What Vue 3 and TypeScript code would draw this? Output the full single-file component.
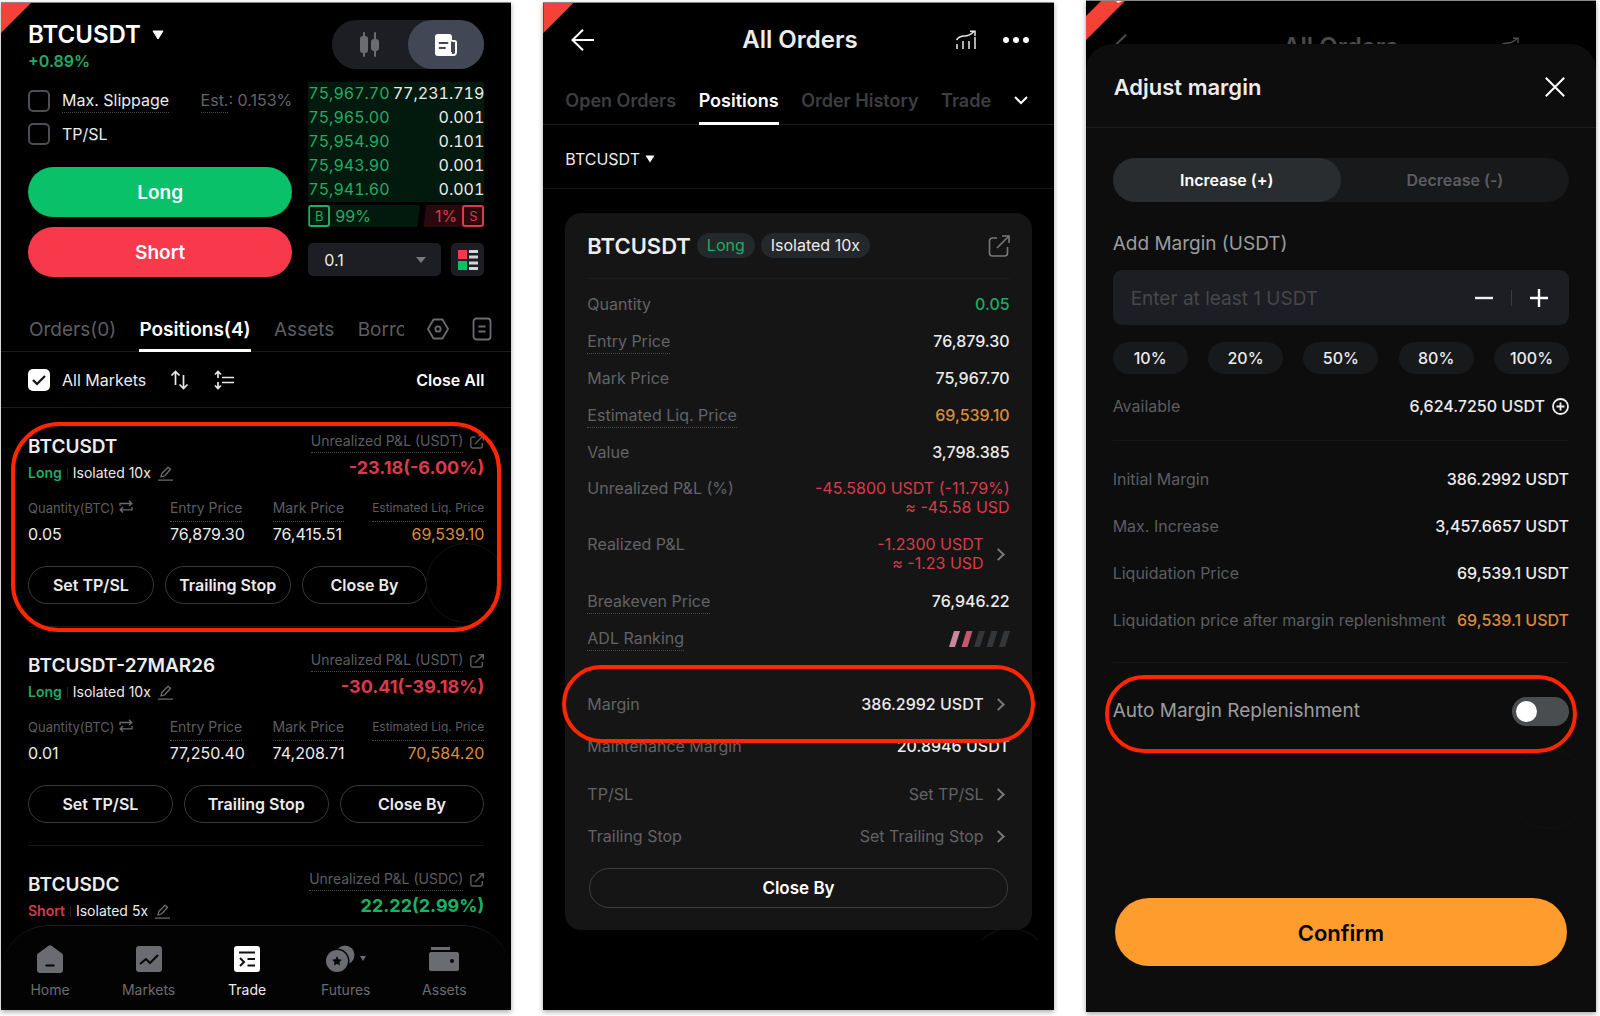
<script setup lang="ts">
import { ref } from 'vue'

interface Position {
  symbol: string
  side: 'Long' | 'Short'
  mode: string
  currency: string
  pnl: string
  tone: 'up' | 'down'
  quantity?: string
  entry?: string
  mark?: string
  liq?: string
  marked?: boolean
}

const book = [
  { price: '75,967.70', size: '77,231.719' },
  { price: '75,965.00', size: '0.001' },
  { price: '75,954.90', size: '0.101' },
  { price: '75,943.90', size: '0.001' },
  { price: '75,941.60', size: '0.001' },
]

const positions: Position[] = [
  { symbol: 'BTCUSDT', side: 'Long', mode: 'Isolated 10x', currency: 'USDT', pnl: '-23.18(-6.00%)', tone: 'down', quantity: '0.05', entry: '76,879.30', mark: '76,415.51', liq: '69,539.10', marked: true },
  { symbol: 'BTCUSDT-27MAR26', side: 'Long', mode: 'Isolated 10x', currency: 'USDT', pnl: '-30.41(-39.18%)', tone: 'down', quantity: '0.01', entry: '77,250.40', mark: '74,208.71', liq: '70,584.20' },
  { symbol: 'BTCUSDC', side: 'Short', mode: 'Isolated 5x', currency: 'USDC', pnl: '22.22(2.99%)', tone: 'up' },
]

const actions = ['Set TP/SL', 'Trailing Stop', 'Close By']

const facts = [
  { label: 'Quantity', value: '0.05', cls: 'up' },
  { label: 'Entry Price', value: '76,879.30', hint: true },
  { label: 'Mark Price', value: '75,967.70' },
  { label: 'Estimated Liq. Price', value: '69,539.10', cls: 'warn', hint: true },
  { label: 'Value', value: '3,798.385' },
]

const summary = [
  { label: 'Initial Margin', value: '386.2992 USDT' },
  { label: 'Max. Increase', value: '3,457.6657 USDT' },
  { label: 'Liquidation Price', value: '69,539.1 USDT' },
  { label: 'Liquidation price after margin replenishment', value: '69,539.1 USDT', cls: 'warn' },
]

const percents = ['10%', '20%', '50%', '80%', '100%']

const slippage = ref(false)
const tpsl = ref(false)
const allMarkets = ref(true)
const autoMargin = ref(false)
const amount = ref('')
</script>

<template>
  <main class="page">
    <!-- Trade screen -->
    <section class="phone trade">
      <span class="corner" aria-hidden="true"></span>
      <header class="pair">
        <div>
          <button class="pair-name" type="button">
            BTCUSDT
            <svg width="12" height="10" viewBox="0 0 12 10"><path d="M1 1h10L6 9z" fill="#fff" stroke="#fff" stroke-linejoin="round" /></svg>
          </button>
          <p class="change up">+0.89%</p>
        </div>
        <div class="view-switch">
          <button type="button" aria-label="Chart">
            <svg width="22" height="26" viewBox="0 0 22 26" fill="#6b6c70"><rect x="1" y="4" width="8" height="17" rx="3" /><rect x="4" y="0" width="2" height="25" rx="1" /><rect x="12" y="7" width="8" height="12" rx="3" /><rect x="15" y="0" width="2" height="25" rx="1" /></svg>
          </button>
          <button type="button" class="on" aria-label="Order form">
            <svg width="22" height="22" viewBox="0 0 22 22"><rect x="0" y="0" width="17" height="22" rx="3" fill="#fff" /><path d="M17 7h2.500a1.500 1.500 0 0 1 1.500 1.500V18.500a2.500 2.500 0 0 1-2.500 2.500H14" fill="none" stroke="#fff" stroke-width="2" /><path d="M16.800 7.500V18" stroke="#414754" stroke-width="1.600" /><path d="M4.500 9h8M4.500 14h5.500" stroke="#414754" stroke-width="1.800" stroke-linecap="round" /></svg>
          </button>
        </div>
      </header>

      <div class="order">
        <div class="order-form">
          <div class="option">
            <label><input v-model="slippage" type="checkbox" class="box" /><span class="hint">Max. Slippage</span></label>
            <span class="est"><span class="hint">Est.</span>: 0.153%</span>
          </div>
          <div class="option">
            <label><input v-model="tpsl" type="checkbox" class="box" /><span>TP/SL</span></label>
          </div>
          <button type="button" class="side buy">Long</button>
          <button type="button" class="side sell">Short</button>
        </div>
        <div class="order-book">
          <table class="book">
            <tbody>
              <tr v-for="row in book" :key="row.price">
                <td class="up">{{ row.price }}</td>
                <td class="size">{{ row.size }}</td>
              </tr>
            </tbody>
          </table>
          <div class="ratio">
            <span class="ratio-buy"><b>B</b>99%</span>
            <span class="ratio-sell">1%<b>S</b></span>
          </div>
          <div class="depth">
            <div class="select-wrap">
              <select aria-label="Price grouping"><option>0.1</option></select>
              <svg width="10" height="6" viewBox="0 0 10 6"><path d="M0 0h10L5 6z" fill="#77787c" /></svg>
            </div>
            <button type="button" class="layout" aria-label="Book layout">
              <svg width="20" height="20" viewBox="0 0 20 20"><path d="M0 0h9v9H0z" fill="#f8384b" /><path d="M0 11h9v9H0z" fill="#0bc168" /><path d="M11 1.500h9M11 7h9M11 13h9M11 18.500h9" stroke="#d5d5d7" stroke-width="3" /></svg>
            </button>
          </div>
        </div>
      </div>

      <nav class="tabs">
        <a href="#orders">Orders(0)</a>
        <a href="#positions" class="on">Positions(4)</a>
        <a href="#assets">Assets</a>
        <a href="#borrow" class="cut">Borrow</a>
        <button type="button" aria-label="Settings">
          <svg width="22" height="22" viewBox="0 0 22 22" fill="none" stroke="#6b6c70" stroke-width="1.800"><path d="M6.500 1.500h9L21 11l-5.500 9.500h-9L1 11z" stroke-linejoin="round" /><circle cx="11" cy="11" r="2.600" /></svg>
        </button>
        <button type="button" aria-label="History">
          <svg width="20" height="24" viewBox="0 0 20 24" fill="none" stroke="#6b6c70" stroke-width="1.800"><rect x="1.500" y="1.500" width="17" height="21" rx="3" /><path d="M6.500 9.500h7M6.500 14.500h7" /></svg>
        </button>
      </nav>

      <div class="filter">
        <label><input v-model="allMarkets" type="checkbox" class="box" /><span>All Markets</span></label>
        <button type="button" aria-label="Sort">
          <svg width="20" height="20" viewBox="0 0 20 20" fill="none" stroke="#e8e8e8" stroke-width="1.700"><path d="M1.500 5.500l4-4 4 4M5.500 1.500V15M9.500 14.500l4 4 4-4M13.500 18.500V5" /></svg>
        </button>
        <button type="button" aria-label="Collapse">
          <svg width="20" height="20" viewBox="0 0 20 20" fill="none" stroke="#e8e8e8" stroke-width="1.700"><path d="M1 4.500l3-3 3 3M4 2v6M4 12v6M1 15.500l3 3 3-3M8 7.500h12M8 12.500h12" /></svg>
        </button>
        <button type="button" class="close-all">Close All</button>
      </div>

      <div class="list">
        <article v-for="p in positions" :key="p.symbol" class="position">
          <div class="top">
            <div>
              <h2>{{ p.symbol }}</h2>
              <p class="mode">
                <span :class="p.side === 'Long' ? 'up' : 'down'">{{ p.side }}</span>
                <i></i>
                {{ p.mode }}
                <svg width="15" height="15" viewBox="0 0 15 15" fill="none" stroke="#6b6c70" stroke-width="1.300"><path d="M3 11l.8-3.500L10 1.200l2.600 2L6.500 10zM0 14.200h15" stroke-linejoin="round" /></svg>
              </p>
            </div>
            <div class="result">
              <p class="caption"><span class="hint">Unrealized P&amp;L ({{ p.currency }})</span>
                <svg width="14" height="14" viewBox="0 0 14 14" fill="none" stroke="#5c5d61" stroke-width="1.400"><path d="M5.500 2H2.500A1.800 1.800 0 0 0 .8 3.800v7.500A1.800 1.800 0 0 0 2.500 13h8a1.800 1.800 0 0 0 1.800-1.800V8M5 9l8-8M8.500.8h4.800V5.500" /></svg>
              </p>
              <p class="pnl" :class="p.tone">{{ p.pnl }}</p>
            </div>
          </div>
          <dl v-if="p.quantity" class="figures">
            <div class="qty">
              <dt>Quantity(BTC)
                <svg width="14" height="13" viewBox="0 0 14 13" fill="none" stroke="#6b6c70" stroke-width="1.300"><path d="M1 6V3.500h12M10 .8l2.800 2.700L10 6M13 7v2.800H1M4 7L1.200 9.800 4 12.500" /></svg>
              </dt>
              <dd>{{ p.quantity }}</dd>
            </div>
            <div><dt><span class="hint">Entry Price</span></dt><dd>{{ p.entry }}</dd></div>
            <div><dt><span class="hint">Mark Price</span></dt><dd>{{ p.mark }}</dd></div>
            <div class="liq"><dt><span class="hint">Estimated Liq. Price</span></dt><dd class="warn">{{ p.liq }}</dd></div>
          </dl>
          <div v-if="p.quantity" class="actions" :class="{ short: p.marked }">
            <button v-for="a in actions" :key="a" type="button">{{ a }}</button>
          </div>
          <span v-if="p.marked" class="ghost" aria-hidden="true"></span>
          <span v-if="p.marked" class="ring" aria-hidden="true"></span>
        </article>
      </div>

      <nav class="dock">
        <a href="#home">
          <svg width="26" height="28" viewBox="0 0 26 28"><path d="M11.500.8a2.500 2.500 0 0 1 3 0L25 8.500a2 2 0 0 1 1 1.700V25a3 3 0 0 1-3 3H3a3 3 0 0 1-3-3V10.200a2 2 0 0 1 1-1.700z" fill="#6b6c72" /><path d="M8.500 20.500h9" stroke="#050505" stroke-width="2" /></svg>
          Home
        </a>
        <a href="#markets">
          <svg width="26" height="28" viewBox="0 0 26 28"><rect y="1" width="26" height="26" rx="3" fill="#6b6c72" /><path d="M4 19l6-5 4 4 8-8" fill="none" stroke="#050505" stroke-width="2" /></svg>
          Markets
        </a>
        <a href="#trade" class="on">
          <svg width="26" height="28" viewBox="0 0 26 28"><rect y="1" width="26" height="26" rx="3" fill="#fff" /><path d="M5 7.500h16M13.500 14h7.500M13.500 20.500h7.500M6 13l4 4-4 4" fill="none" stroke="#111" stroke-width="2" /></svg>
          Trade
        </a>
        <a href="#futures">
          <svg width="42" height="28" viewBox="0 0 42 28"><circle cx="20" cy="10" r="9.500" fill="#6b6c72" /><circle cx="12" cy="16" r="12.500" fill="#050505" /><circle cx="12" cy="16" r="11" fill="#6b6c72" /><path d="M12 11l1.500 3.300 3.500.4-2.600 2.400.7 3.500-3.100-1.800-3.100 1.800.7-3.500L7 14.700l3.500-.4z" fill="#050505" /><path d="M35 11h6l-3 5z" fill="#6b6c72" /></svg>
          Futures
        </a>
        <a href="#wallet">
          <svg width="30" height="28" viewBox="0 0 30 28"><path d="M2 3.500h19" stroke="#6b6c72" stroke-width="3" /><rect y="7" width="30" height="19" rx="2" fill="#6b6c72" /><circle cx="23" cy="16" r="2" fill="#050505" /></svg>
          Assets
        </a>
      </nav>
    </section>

    <!-- Orders screen -->
    <section class="phone orders">
      <span class="corner" aria-hidden="true"></span>
      <header class="bar">
        <button type="button" aria-label="Back">
          <svg width="24" height="22" viewBox="0 0 24 22" fill="none" stroke="#fff" stroke-width="2"><path d="M12 .8L1.500 11 12 21.200M1.500 11H23" /></svg>
        </button>
        <h1>All Orders</h1>
        <div class="tools">
          <button type="button" aria-label="Analysis">
            <svg width="20" height="20" viewBox="0 0 20 20" fill="none" stroke="#e8e8e8" stroke-width="1.500"><path d="M1 19v-5M7 19v-8M13 19v-8M19 19V7M.5 10c2-3 4-4 8-4 4 0 6-1 9.500-4.500M14 1.200h5V6" /></svg>
          </button>
          <button type="button" aria-label="More">
            <svg width="26" height="6" viewBox="0 0 26 6" fill="#fff"><circle cx="3" cy="3" r="3" /><circle cx="13" cy="3" r="3" /><circle cx="23" cy="3" r="3" /></svg>
          </button>
        </div>
      </header>
      <nav class="order-tabs">
        <a href="#open">Open Orders</a>
        <a href="#held" class="on">Positions</a>
        <a href="#past">Order History</a>
        <a href="#fills">Trade</a>
        <button type="button" aria-label="All tabs">
          <svg width="14" height="9" viewBox="0 0 14 9" fill="none" stroke="#fff" stroke-width="2"><path d="M1 1l6 6 6-6" /></svg>
        </button>
      </nav>
      <div class="symbol-row">
        <button type="button">
          BTCUSDT
          <svg width="10" height="8" viewBox="0 0 10 8"><path d="M.5.5h9L5 7.500z" fill="#fff" /></svg>
        </button>
      </div>

      <article class="card">
        <header class="card-head">
          <h2>BTCUSDT</h2>
          <span class="tag up">Long</span>
          <span class="tag">Isolated 10x</span>
          <button type="button" aria-label="Share">
            <svg width="22" height="22" viewBox="0 0 22 22" fill="none" stroke="#77787c" stroke-width="1.600"><path d="M9 3H4.500A3 3 0 0 0 1.500 6v12a3 3 0 0 0 3 3h12a3 3 0 0 0 3-3v-6M9 13L21 1M14 1h7v7" /></svg>
          </button>
        </header>
        <dl class="facts">
          <div v-for="f in facts" :key="f.label">
            <dt><span :class="{ hint: f.hint }">{{ f.label }}</span></dt>
            <dd :class="f.cls">{{ f.value }}</dd>
          </div>
          <div class="double">
            <dt>Unrealized P&amp;L (%)</dt>
            <dd class="down">-45.5800 USDT (-11.79%)<br />≈ -45.58 USD</dd>
          </div>
          <div class="double">
            <dt>Realized P&amp;L</dt>
            <dd class="down go"><span>-1.2300 USDT<br />≈ -1.23 USD</span></dd>
          </div>
          <div>
            <dt><span class="hint">Breakeven Price</span></dt>
            <dd>76,946.22</dd>
          </div>
          <div>
            <dt><span class="hint">ADL Ranking</span></dt>
            <dd class="adl">
              <svg width="61" height="18" viewBox="0 0 61 18"><path d="M5 1h6L6 17H0z" fill="#c8879a" /><path d="M17.500 1h6l-5 16h-6z" fill="#c75471" /><path d="M30 1h6l-5 16h-6zM42.500 1h6l-5 16h-6zM55 1h6l-5 16h-6z" fill="#343637" /></svg>
            </dd>
          </div>
          <div class="margin-row">
            <dt>Margin</dt>
            <dd class="go">386.2992 USDT</dd>
            <span class="ring" aria-hidden="true"></span>
          </div>
          <div class="maintenance">
            <dt>Maintenance Margin</dt>
            <dd>20.8946 USDT</dd>
          </div>
          <div class="set">
            <dt>TP/SL</dt>
            <dd class="go muted">Set TP/SL</dd>
          </div>
          <div class="set">
            <dt>Trailing Stop</dt>
            <dd class="go muted">Set Trailing Stop</dd>
          </div>
        </dl>
        <button type="button" class="close-by">Close By</button>
        <span class="ghost" aria-hidden="true"></span>
      </article>
    </section>

    <!-- Margin sheet -->
    <section class="phone margin">
      <svg class="ribbon" width="39" height="40" viewBox="0 0 39 40" aria-hidden="true"><path d="M15 0h24L0 39V15z" fill="#f44336" /><path d="M30 0h6l-4 2z" fill="#fff" /></svg>
      <header class="behind">
        <svg width="24" height="22" viewBox="0 0 24 22" fill="none" stroke="#4a4b4d" stroke-width="2"><path d="M12 .8L1.500 11 12 21.200M1.500 11H23" /></svg>
        <span>All Orders</span>
        <svg width="20" height="20" viewBox="0 0 20 20" fill="none" stroke="#4a4b4d" stroke-width="1.500"><path d="M1 19v-5M7 19v-8M13 19v-8M19 19V7M.5 10c2-3 4-4 8-4 4 0 6-1 9.500-4.500M14 1.200h5V6" /></svg>
      </header>
      <div class="sheet">
        <header class="sheet-head">
          <h1>Adjust margin</h1>
          <button type="button" aria-label="Close">
            <svg width="20" height="20" viewBox="0 0 20 20" fill="none" stroke="#fff" stroke-width="2"><path d="M.8.8l18.400 18.400M19.200.8L.8 19.200" /></svg>
          </button>
        </header>
        <form class="sheet-body" @submit.prevent>
          <div class="segment">
            <button type="button" class="on">Increase (+)</button>
            <button type="button">Decrease (-)</button>
          </div>
          <label for="amount" class="field-label">Add Margin (USDT)</label>
          <div class="field">
            <input id="amount" v-model="amount" type="text" placeholder="Enter at least 1 USDT" />
            <button type="button" aria-label="Less">
              <svg width="18" height="18" viewBox="0 0 18 18"><path d="M0 9h18" stroke="#eee" stroke-width="2.400" /></svg>
            </button>
            <i></i>
            <button type="button" aria-label="More">
              <svg width="18" height="18" viewBox="0 0 18 18"><path d="M0 9h18M9 0v18" stroke="#fff" stroke-width="2.400" /></svg>
            </button>
          </div>
          <div class="percents">
            <button v-for="p in percents" :key="p" type="button">{{ p }}</button>
          </div>
          <dl class="available">
            <dt>Available</dt>
            <dd>6,624.7250 USDT
              <svg width="17" height="17" viewBox="0 0 17 17" fill="none" stroke="#eee" stroke-width="1.800"><circle cx="8.500" cy="8.500" r="7.500" /><path d="M8.500 4.500v8M4.500 8.500h8" /></svg>
            </dd>
          </dl>
          <dl class="summary">
            <div v-for="s in summary" :key="s.label">
              <dt>{{ s.label }}</dt>
              <dd :class="s.cls">{{ s.value }}</dd>
            </div>
          </dl>
          <div class="auto">
            <label for="auto">Auto Margin Replenishment</label>
            <input id="auto" v-model="autoMargin" type="checkbox" role="switch" class="switch" />
            <span class="ghost" aria-hidden="true"></span>
            <span class="ring" aria-hidden="true"></span>
          </div>
          <button type="submit" class="confirm">Confirm</button>
        </form>
      </div>
    </section>
  </main>
</template>

<style>
body {
  margin: 0;
  background: #fff;
}
</style>

<style scoped>
* {
  box-sizing: border-box;
}
.page {
  display: flex;
  gap: 32px;
  min-height: 100vh;
  padding: 0 4px 0 1px;
  font-family: Inter, 'Liberation Sans', sans-serif;
  font-size: 16px;
  line-height: 20px;
  color: #ececec;
}
h1, h2, p, dl, dt, dd {
  margin: 0;
}
button, input, select {
  font: inherit;
  color: inherit;
}
button {
  padding: 0;
  border: 0;
  background: none;
}
a {
  color: inherit;
  text-decoration: none;
}
svg {
  display: block;
  flex: none;
}
.up { color: #20ab66; }
.down { color: #db3a4c; }
.warn { color: #dc8c39; }
.hint {
  padding-bottom: 2px;
  border-bottom: 1px dotted #4a4b4d;
}
.phone {
  position: relative;
  display: flex;
  flex: 1;
  flex-direction: column;
  min-width: 0;
  margin: 2px 0 6px;
  border-top: 1px solid #8a8a8c;
  background: #000;
  box-shadow: 0 2px 5px rgba(0, 0, 0, 0.35);
}
.corner {
  position: absolute;
  top: 0;
  left: 0;
  width: 30px;
  height: 30px;
  background: #f44336;
  clip-path: polygon(0 0, 100% 0, 0 100%);
}
.ring {
  position: absolute;
  border: 4px solid #ff2600;
  border-radius: 48px;
  pointer-events: none;
}
.ghost {
  position: absolute;
  width: 80px;
  height: 80px;
  border: 1px solid #111;
  border-radius: 50%;
  pointer-events: none;
}
.box {
  flex: none;
  width: 22px;
  height: 22px;
  margin: 0;
  border: 2px solid #4d4e52;
  border-radius: 5px;
  appearance: none;
}
.box:checked {
  border: 0;
  background: #fff url("data:image/svg+xml,%3Csvg xmlns='http://www.w3.org/2000/svg' viewBox='0 0 22 22' fill='none' stroke='%23111' stroke-width='2.2'%3E%3Cpath d='M5 11l4 4 8-8'/%3E%3C/svg%3E");
}

/* Trade */
.pair {
  display: flex;
  justify-content: space-between;
  align-items: flex-start;
  padding: 17px 27px 0;
}
.pair-name {
  display: flex;
  align-items: center;
  gap: 11px;
  height: 30px;
  font-size: 24px;
  font-weight: 600;
  color: #fff;
}
.change {
  padding-top: 1px;
  font-size: 16px;
  font-weight: 600;
}
.view-switch {
  display: flex;
  height: 49px;
  border-radius: 25px;
  background: #1d1e23;
}
.view-switch button {
  display: flex;
  align-items: center;
  justify-content: center;
  width: 76px;
  border-radius: 25px;
}
.view-switch .on {
  background: #414754;
}
.order {
  display: flex;
  gap: 16px;
  padding: 11px 27px 0;
}
.order-form {
  display: flex;
  flex: 1;
  flex-direction: column;
}
.option {
  display: flex;
  justify-content: space-between;
  height: 33px;
  padding-top: 8px;
}
.option label, .filter label {
  display: flex;
  align-items: center;
  gap: 12px;
  height: 22px;
}
.est {
  color: #636468;
}
.side {
  height: 50px;
  padding-top: 1px;
  border-radius: 25px;
  font-size: 19px;
  font-weight: 600;
  color: #fff;
}
.buy {
  margin-top: 19px;
  background: #08c169;
}
.sell {
  margin-top: 10px;
  background: #f8384b;
}
.order-book {
  width: 176px;
}
.book {
  width: 100%;
  border-collapse: collapse;
  background: #021a0e;
  font-variant-numeric: tabular-nums;
}
.book td {
  height: 24px;
  padding: 0 0 2px;
}
.book .size {
  text-align: right;
}
.ratio {
  display: flex;
  gap: 3px;
  height: 22px;
  margin-top: 3px;
  color: #20ab66;
}
.ratio span {
  display: flex;
  align-items: center;
  gap: 5px;
  border-radius: 3px;
}
.ratio b {
  display: flex;
  align-items: center;
  justify-content: center;
  width: 22px;
  height: 22px;
  border: 2px solid currentColor;
  border-radius: 3px;
  font-size: 13px;
  font-weight: 400;
}
.ratio-buy {
  flex: 1;
  background: #021a0e;
  clip-path: polygon(0 0, 100% 0, 97% 100%, 0 100%);
}
.ratio-sell {
  justify-content: flex-end;
  width: 61px;
  background: #2a090d;
  color: #db3a4c;
  clip-path: polygon(5% 0, 100% 0, 100% 100%, 0 100%);
}
.depth {
  display: flex;
  gap: 10px;
  margin-top: 16px;
}
.select-wrap {
  display: flex;
  flex: 1;
  align-items: center;
  height: 33px;
  padding-right: 15px;
  border-radius: 5px;
  background: #1d1e23;
}
.select-wrap select {
  flex: 1;
  padding: 0 0 0 16px;
  border: 0;
  background: none;
  appearance: none;
}
.layout {
  display: flex;
  align-items: center;
  justify-content: center;
  width: 33px;
  height: 33px;
  border-radius: 5px;
  background: #1d1e23;
}
.tabs {
  display: flex;
  align-items: center;
  justify-content: space-between;
  height: 46px;
  margin-top: 29px;
  padding: 0 19px 0 28px;
  border-bottom: 1px solid #17181a;
  font-size: 19px;
  color: #5c5d61;
}
.tabs a {
  height: 46px;
  line-height: 48px;
}
.tabs .on {
  border-bottom: 3px solid #fff;
  font-weight: 600;
  color: #fff;
}
.tabs .cut {
  width: 46px;
  overflow: hidden;
}
.filter {
  display: flex;
  align-items: center;
  gap: 24px;
  height: 56px;
  padding: 0 27px;
  border-bottom: 1px solid #17181a;
}
.close-all {
  margin-left: auto;
  font-weight: 600;
  color: #fff;
}
.list {
  flex: 1;
  padding: 0 27px;
}
.position {
  position: relative;
  height: 219px;
  padding-top: 27px;
  border-bottom: 1px solid #17181a;
}
.position:last-child {
  height: auto;
  border: 0;
}
.top {
  display: flex;
  justify-content: space-between;
}
.top h2 {
  height: 24px;
  font-size: 19px;
  font-weight: 600;
  line-height: 24px;
}
.mode {
  display: flex;
  align-items: center;
  gap: 5px;
  padding-top: 4px;
  font-size: 14px;
}
.mode span {
  font-weight: 600;
}
.mode i {
  width: 1px;
  height: 11px;
  background: #222;
}
.mode svg {
  margin-left: 2px;
}
.result {
  text-align: right;
}
.caption {
  display: flex;
  align-items: center;
  justify-content: flex-end;
  gap: 7px;
  height: 20px;
  margin-top: -3px;
  font-size: 14px;
  line-height: 18px;
  color: #5c5d61;
}
.pnl {
  padding-top: 6px;
  font-size: 18px;
  font-weight: 700;
}
.up.pnl { color: #16b364; }
.figures {
  display: flex;
  justify-content: space-between;
  padding-top: 15px;
}
.figures dt {
  display: flex;
  gap: 4px;
  height: 24px;
  font-size: 14px;
  color: #5c5d61;
}
.figures dt svg {
  margin-top: 2px;
}
.figures dd {
  line-height: 24px;
}
.figures .qty {
  width: 114px;
}
.figures .qty dt {
  font-size: 13px;
}
.figures .liq dt {
  font-size: 12px;
}
.figures .liq dd {
  text-align: right;
}
.actions {
  display: flex;
  gap: 11px;
  margin-top: 20px;
}
.actions.short {
  padding-right: 57px;
}
.actions button {
  flex: 1;
  height: 38px;
  border: 1px solid #38393b;
  border-radius: 19px;
  font-weight: 600;
}
.position .ring {
  inset: 14px -17px -6px -17px;
}
.position .ghost {
  top: 135px;
  right: -22px;
}
.dock {
  display: flex;
  justify-content: space-between;
  height: 85px;
  padding: 19px 39px 0 21px;
  border-top: 1px solid #1c1c1e;
  border-radius: 48px 48px 0 0;
  background: #030303;
  font-size: 14px;
  color: #6b6c72;
}
.dock a {
  display: flex;
  flex-direction: column;
  align-items: center;
  gap: 7px;
  width: 56px;
}
.dock .on {
  color: #eee;
}

/* Orders */
.bar {
  display: grid;
  grid-template-columns: 1fr auto 1fr;
  align-items: center;
  height: 73px;
  padding: 0 25px 0 28px;
}
.bar h1, .behind span {
  font-size: 24px;
  font-weight: 600;
  line-height: 26px;
}
.tools {
  display: flex;
  align-items: center;
  justify-content: flex-end;
  gap: 27px;
}
.order-tabs {
  display: flex;
  align-items: center;
  justify-content: space-between;
  height: 49px;
  padding: 0 26px 0 22px;
  border-bottom: 1px solid #1c1d1f;
  font-size: 18px;
  font-weight: 600;
  color: #3d3e41;
}
.order-tabs a {
  height: 49px;
  line-height: 49px;
}
.order-tabs .on {
  border-bottom: 3px solid #fff;
  color: #fff;
}
.symbol-row {
  height: 64px;
  padding: 24px 22px 0;
  border-bottom: 1px solid #131416;
}
.symbol-row button {
  display: flex;
  align-items: center;
  gap: 5px;
}
.card {
  position: relative;
  margin: 24px 22px 0;
  padding: 0 22px 22px;
  border-radius: 16px;
  background: #151515;
}
.card-head {
  display: flex;
  align-items: center;
  gap: 6px;
  height: 66px;
  border-bottom: 1px solid #1c1c1d;
}
.card-head h2 {
  font-size: 22px;
  font-weight: 600;
}
.card-head button {
  margin-left: auto;
}
.tag {
  padding: 2px 10px 3px;
  border-radius: 13px;
  background: #25282b;
}
.facts {
  display: flex;
  flex-direction: column;
  gap: 17px;
  padding-top: 15px;
}
.facts > div {
  display: flex;
  justify-content: space-between;
}
.facts dt {
  color: #626367;
}
.facts dd {
  font-weight: 500;
  text-align: right;
}
.facts .double {
  padding-bottom: 1px;
  line-height: 19px;
}
.facts .double dd {
  font-weight: 400;
}
.facts .go {
  display: flex;
  align-items: center;
}
.go::after {
  width: 7px;
  height: 7px;
  margin: 0 7px 0 10px;
  border: solid #77787c;
  border-width: 2px 2px 0 0;
  transform: rotate(45deg);
  content: '';
}
.facts .muted {
  font-weight: 400;
  color: #626367;
}
.facts .adl {
  padding-top: 2px;
}
.facts .margin-row {
  position: relative;
  padding: 29px 0;
}
.margin-row .ring {
  inset: 0 -25px;
}
.facts .maintenance {
  margin-top: -24px;
}
.facts .set {
  margin: 11px 0 -6px;
}
.close-by {
  width: calc(100% - 4px);
  height: 40px;
  margin: 28px 2px 0;
  border: 1px solid #3c3d3f;
  border-radius: 20px;
  font-size: 17px;
  font-weight: 600;
  color: #fff;
}
.card .ghost {
  right: -18px;
  bottom: -78px;
  border-color: #111 transparent transparent;
}

/* Margin */
.margin {
  margin: 0 0 4px;
}
.ribbon {
  position: absolute;
  top: 0;
  left: 0;
}
.behind {
  display: grid;
  grid-template-columns: 1fr auto 1fr;
  align-items: start;
  height: 43px;
  padding: 33px 28px 0;
  overflow: hidden;
  color: #4a4b4d;
}
.behind svg:last-child {
  margin: 3px 49px 0 auto;
}
.sheet {
  display: flex;
  flex: 1;
  flex-direction: column;
  border-radius: 26px 26px 0 0;
  background: #0d0d0d;
}
.sheet-head {
  display: flex;
  align-items: center;
  justify-content: space-between;
  height: 84px;
  padding: 2px 31px 0 28px;
  border-bottom: 1px solid #1a1b1e;
}
.sheet-head h1 {
  font-size: 22px;
  font-weight: 600;
}
.sheet-body {
  display: flex;
  flex: 1;
  flex-direction: column;
  padding: 30px 27px 46px;
}
.segment {
  display: flex;
  height: 44px;
  border-radius: 22px;
  background: #18191b;
  font-weight: 600;
  color: #5c5d61;
}
.segment button {
  flex: 1;
  border-radius: 22px;
}
.segment .on {
  background: #2a2d30;
  color: #fff;
}
.field-label, .auto label {
  font-size: 19px;
  color: #9c9c9e;
}
.field-label {
  margin: 32px 0 16px;
}
.field {
  display: flex;
  align-items: center;
  gap: 18px;
  height: 55px;
  padding: 0 21px 0 18px;
  border-radius: 9px;
  background: #1d1e23;
}
.field input {
  flex: 1;
  min-width: 0;
  padding: 2px 0 0;
  border: 0;
  outline: 0;
  background: none;
  font-size: 19px;
}
.field input::placeholder {
  color: #46474b;
}
.field i {
  width: 1px;
  height: 16px;
  background: #3c3d41;
}
.percents {
  display: flex;
  justify-content: space-between;
  margin-top: 17px;
}
.percents button {
  width: 75px;
  height: 32px;
  border-radius: 16px;
  background: #18191b;
  font-weight: 500;
}
.available {
  display: flex;
  justify-content: space-between;
  padding: 22px 0 24px;
  border-bottom: 1px solid #161617;
}
.available dt, .summary dt {
  color: #5c5d61;
}
.available dd, .summary dd {
  font-weight: 500;
}
.available dd {
  display: flex;
  align-items: center;
  gap: 7px;
}
.summary {
  display: flex;
  flex-direction: column;
  gap: 27px;
  padding: 28px 0 32px;
  border-bottom: 1px solid #161617;
}
.summary div {
  display: flex;
  justify-content: space-between;
}
.auto {
  position: relative;
  display: flex;
  align-items: center;
  justify-content: space-between;
  height: 80px;
  margin-top: 8px;
}
.auto .ring {
  inset: 4px -8px -2px;
}
.auto .ghost {
  top: 78px;
  right: -20px;
  border-color: #131313 transparent;
}
.switch {
  width: 57px;
  height: 29px;
  margin: 0;
  padding: 4px;
  border-radius: 15px;
  background: #4a4d50;
  appearance: none;
}
.switch::before {
  display: block;
  width: 21px;
  height: 21px;
  border-radius: 50%;
  background: #fff;
  content: '';
}
.switch:checked::before {
  margin-left: auto;
}
.confirm {
  height: 68px;
  margin: auto 2px 0;
  padding-top: 2px;
  border-radius: 34px;
  background: #ff9c2e;
  font-size: 22px;
  font-weight: 600;
  color: #000;
}
</style>
